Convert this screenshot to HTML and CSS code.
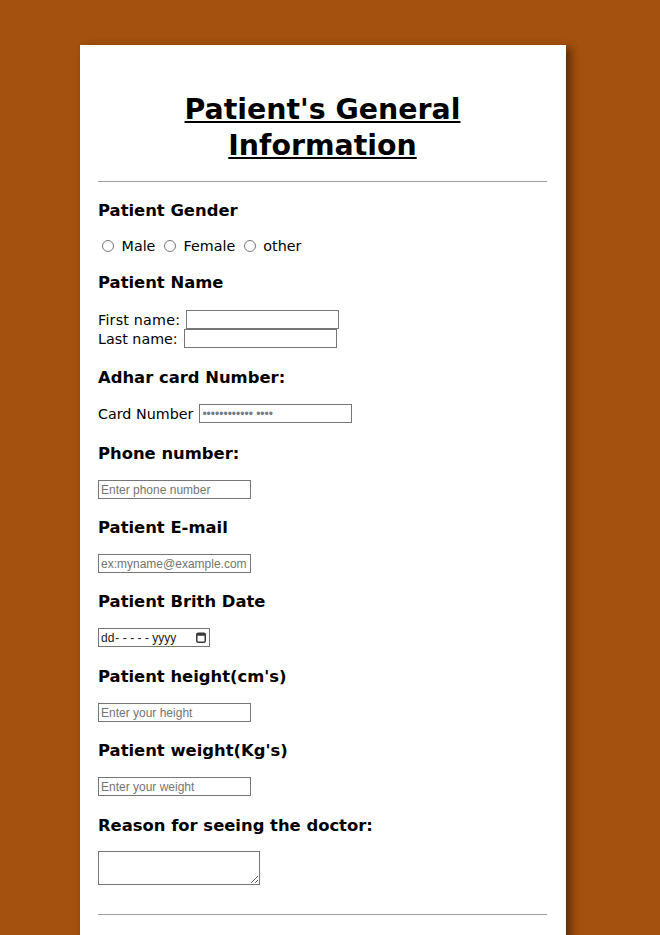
FILE: index.html
```html
<!DOCTYPE html>
<html lang="en">
<head>
<meta charset="utf-8">
<title>Patient's General Information</title>
<link rel="stylesheet" href="styles.css">
</head>
<body>
<div class="page">
  <main class="card">
    <h1 class="title">Patient's General Information</h1>
    <hr class="rule">

    <section class="field field-gender">
      <h3 class="field-title">Patient Gender</h3>
      <div class="radio-row">
        <input type="radio" name="gender" id="g-male"> <label for="g-male">Male</label> <input type="radio" name="gender" id="g-female"> <label for="g-female">Female</label> <input type="radio" name="gender" id="g-other"> <label for="g-other">other</label>
      </div>
    </section>

    <section class="field field-name">
      <h3 class="field-title">Patient Name</h3>
      <div class="inline-row"><span class="label-first">First name:</span><input class="text-input" type="text"></div>
      <div class="inline-row"><span>Last name:</span><input class="text-input" type="text"></div>
    </section>

    <section class="field field-card">
      <h3 class="field-title">Adhar card Number:</h3>
      <div class="inline-row"><span>Card Number</span><input class="text-input dots" type="text" placeholder="•••••••••••• ••••"></div>
    </section>

    <section class="field">
      <h3 class="field-title">Phone number:</h3>
      <input class="text-input block" type="tel" placeholder="Enter phone number">
    </section>

    <section class="field">
      <h3 class="field-title">Patient E-mail</h3>
      <input class="text-input block" type="email" placeholder="ex:myname@example.com">
    </section>

    <section class="field field-date">
      <h3 class="field-title">Patient Brith Date</h3>
      <div class="date-input">
        <span class="date-text">dd<span class="date-dash">-----</span>yyyy</span>
        <svg class="cal-icon" width="10" height="11" viewBox="0 0 10 11" aria-hidden="true">
          <rect x="0.75" y="1.25" width="8.5" height="9" rx="1.5" fill="none" stroke="#3a3a3a" stroke-width="1.5"/>
          <rect x="0.75" y="1.25" width="8.5" height="2.5" fill="#3a3a3a"/>
        </svg>
      </div>
    </section>

    <section class="field">
      <h3 class="field-title">Patient height(cm's)</h3>
      <input class="text-input block" type="text" placeholder="Enter your height">
    </section>

    <section class="field field-weight">
      <h3 class="field-title">Patient weight(Kg's)</h3>
      <input class="text-input block" type="text" placeholder="Enter your weight">
    </section>

    <section class="field field-reason">
      <h3 class="field-title">Reason for seeing the doctor:</h3>
      <textarea class="notes"></textarea>
    </section>

    <hr class="rule rule-bottom">
  </main>
</div>
</body>
</html>
```

FILE: styles.css
```css
html {
  overflow: hidden;
}

body {
  margin: 0;
  background: #a4500e;
  font-family: "DejaVu Sans", Verdana, sans-serif;
  color: #000;
}

.page {
  padding: 45px 0 0 80px;
}

.card {
  width: 486px;
  box-sizing: border-box;
  background: #fff;
  padding: 47px 19px 60px 18px;
  box-shadow: 5px 3px 8px rgba(0, 0, 0, 0.45);
}

.title {
  margin: 0;
  font-size: 28.4px;
  line-height: 36px;
  font-weight: bold;
  text-align: center;
  text-decoration: underline;
}

.rule {
  border: 0;
  border-top: 1px solid #9e9e9e;
  height: 0;
  margin: 17px 0 18px;
}

.rule-bottom {
  margin: 29px 0 0;
}

.field {
  margin-bottom: 18px;
}

.field-title {
  margin: 0 0 16px;
  padding-top: 1px;
  font-size: 16.4px;
  line-height: 20px;
  font-weight: bold;
}

.field-gender .field-title {
  margin-bottom: 15px;
}

.field-gender {
  margin-bottom: 16px;
}

.radio-row {
  font-size: 14.3px;
  line-height: 20px;
  height: 20px;
}

.radio-row input {
  width: 12px;
  height: 12px;
  margin: 3px 3px 0 4px;
  vertical-align: -1px;
}

.field-name .field-title {
  margin-bottom: 17px;
}

.field-name {
  margin-bottom: 19px;
}

.field-card {
  margin-bottom: 20px;
}

.field-date {
  margin-bottom: 19px;
}

.field-weight {
  margin-bottom: 19px;
}

.field-reason .field-title {
  margin-bottom: 15px;
}

.inline-row {
  display: flex;
  align-items: center;
  gap: 6px;
  height: 19px;
  font-size: 14.3px;
}

.label-first {
  letter-spacing: 0.2px;
}

.text-input {
  width: 153px;
  height: 19px;
  box-sizing: border-box;
  margin: 0;
  padding: 1px 2px;
  border: 1px solid #767676;
  border-radius: 0;
  font: 12px "Liberation Sans", Arial, sans-serif;
  color: #000;
  background: #fff;
}

.text-input::placeholder {
  color: #757575;
  opacity: 1;
}

.text-input.block {
  display: block;
}

.dots::placeholder {
  color: #6f7b88;
}

.date-input {
  display: flex;
  align-items: center;
  justify-content: space-between;
  width: 112px;
  height: 19px;
  box-sizing: border-box;
  border: 1px solid #767676;
  padding: 0 3px 0 2px;
  font: 12px "Liberation Sans", Arial, sans-serif;
  color: #1a1a1a;
}

.date-dash {
  letter-spacing: 3.4px;
  margin-left: 1px;
}

.cal-icon {
  display: block;
}

.notes {
  display: block;
  width: 162px;
  height: 34px;
  box-sizing: border-box;
  margin: 0;
  border: 1px solid #767676;
  border-radius: 0;
  padding: 2px;
  font: 13px "Liberation Mono", monospace;
}
```
